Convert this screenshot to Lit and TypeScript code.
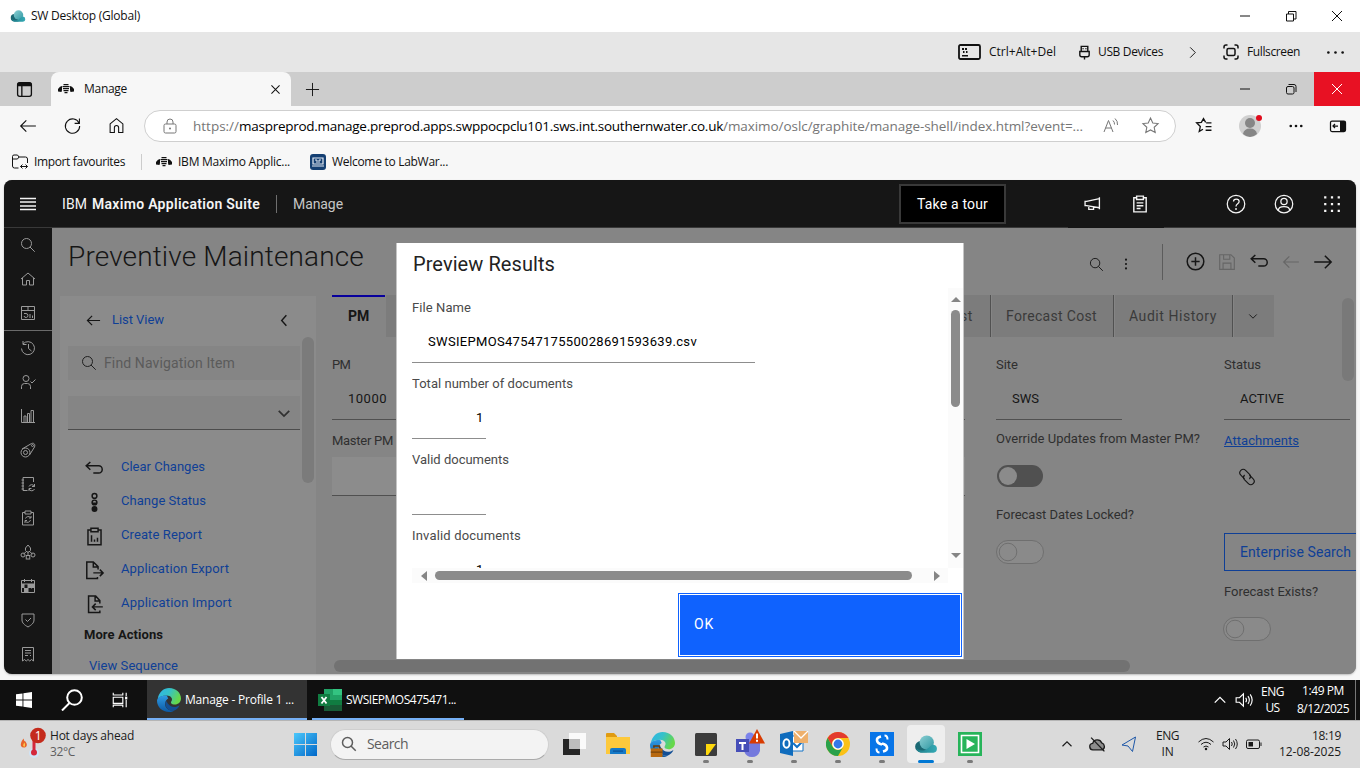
import { LitElement, html, css, svg, nothing } from "lit";
import { customElement, property } from "lit/decorators.js";

/** One line of text whose tracking is tuned so that it spans a known width. */
@customElement("fit-label")
class FitLabel extends LitElement {
  @property({ type: Number }) w = 0;
  static styles = css`
    :host { display: inline-block; white-space: pre; flex: none; }
  `;
  render() {
    return html`<slot></slot>`;
  }
  firstUpdated() {
    const chars = (this.textContent ?? "").length;
    const natural = this.getBoundingClientRect().width;
    if (!this.w || !chars) return;
    this.style.letterSpacing = `${(this.w - natural) / chars}px`;
    this.style.width = `${this.w}px`;
  }
}

const t = (text: string, w: number, cls = "") =>
  html`<fit-label class=${cls} .w=${w}>${text}</fit-label>`;

const shapes: Record<string, unknown> = {
  // viewBox 32, filled or stroked with the current colour
  search: svg`<circle cx="13" cy="13" r="10"/><path d="M20 20l9.500 9.500"/>`,
  home: svg`<path d="M2 16L16 4l14 12M5 14v14h8v-9h6v9h8V14"/>`,
  dash: svg`<path d="M3 3h26v26H3zM3 11h26M16 3v8M8 17h4a4 4 0 1 1-4 5M20 26v-8M25 26v-5"/>`,
  history: svg`<path d="M6 8a13 13 0 1 1-3 9M6 2v7h7M17 8v9l6 5"/>`,
  usercheck: svg`<circle cx="12" cy="9" r="6"/><path d="M3 30v-5a6 6 0 0 1 6-6h6a6 6 0 0 1 6 6v5M21 15l3 3 7-7"/>`,
  chart: svg`<path d="M3 2v27h27M8 29V16h4v13M15 29V11h4v18M22 29V5h5v24"/>`,
  asset: svg`<circle cx="11" cy="21" r="9"/><circle cx="11" cy="21" r="4"/><path d="M4 14L23 3c5-2 8 2 6 7L19 26"/><circle cx="25" cy="7" r="2"/>`,
  cycle: svg`<path d="M27 12V3H6v26h9M3 8h5M3 14h5M3 20h5M3 26h5M18 21a6 6 0 0 1 11 0M29 16v5h-5M29 26a6 6 0 0 1-11 0M18 30v-5h5"/>`,
  clipcycle: svg`<path d="M10 5H5v25h22V5h-5M10 2h12v6H10zM11 17a6 6 0 0 1 10-2M22 12v4h-4M21 20a6 6 0 0 1-10 3M10 26v-5h4"/>`,
  nodes: svg`<path d="M16 2l5 6v5l-3 3h-4l-3-3V8zM16 16v6M13 15l-6 5M19 15l6 5"/><circle cx="6" cy="22" r="4"/><circle cx="26" cy="22" r="4"/><rect x="12.500" y="23" width="7" height="7"/>`,
  calendar: svg`<path d="M3 5h26v24H3zM3 12h26M9 2v6M23 2v6M16 12v17M9 20v9M23 12v9"/><path class="f" d="M16 12h13v8h-13zM9 20h7v9h-7zM3 12h6v8H3z"/>`,
  shield: svg`<path d="M4 4h24v12c0 6-5 10-12 14C9 26 4 22 4 16zM11 15l4 4 7-7"/>`,
  receipt: svg`<path d="M5 30V3h22v27l-4-3-3.500 3-3.500-3-3.500 3L9 27zM10 9h12M10 14h12M10 19h6M20 19h2"/>`,
  menu: svg`<path d="M0 5h32M0 12h32M0 20h32M0 27h32"/>`,
  megaphone: svg`<path d="M29 4v23M29 7L5 12H2v8h3l24 4M9 21v6h9v-4"/>`,
  clipboard: svg`<path d="M10 5H5v25h22V5h-5M10 2h12v6H10zM10 14h12M10 19h12M10 24h7"/>`,
  help: svg`<circle cx="16" cy="16" r="14"/><path d="M12 12c0-5 9-5 9 0 0 4-5 3-5 8"/><circle class="f" cx="16" cy="24" r="1.500"/>`,
  user: svg`<circle cx="16" cy="16" r="14"/><circle cx="16" cy="12" r="5"/><path d="M7 26c0-8 18-8 18 0"/>`,
  apps: svg`<path class="f" d="M2 2h4v4H2zM14 2h4v4h-4zM26 2h4v4h-4zM2 14h4v4H2zM14 14h4v4h-4zM26 14h4v4h-4zM2 26h4v4H2zM14 26h4v4h-4zM26 26h4v4h-4z"/>`,
  kebab: svg`<circle class="f" cx="16" cy="6" r="2.400"/><circle class="f" cx="16" cy="16" r="2.400"/><circle class="f" cx="16" cy="26" r="2.400"/>`,
  add: svg`<circle cx="16" cy="16" r="14"/><path d="M16 9v14M9 16h14"/>`,
  save: svg`<path d="M3 3h20l6 6v20H3zM10 3v8h11V3M9 29V18h14v11"/>`,
  undo: svg`<path d="M9 5L2 11.500l7 6.500M2 11.500h21a6 6 0 0 1 0 12h-9"/>`,
  left: svg`<path d="M13 6L3 16l10 10M3 16h27"/>`,
  right: svg`<path d="M19 6l10 10-10 10M2 16h27"/>`,
  chevL: svg`<path d="M20 5L10 16l10 11"/>`,
  chevR: svg`<path d="M11 5l11 11-11 11"/>`,
  chevD: svg`<path d="M4 11l12 12 12-12"/>`,
  chevU: svg`<path d="M4 22L16 10l12 12"/>`,
  status: svg`<circle cx="16" cy="5" r="4"/><circle cx="16" cy="16" r="4"/><path class="f" d="M12 16h8a4 4 0 0 1-8 0z"/><circle class="f" cx="16" cy="27" r="5"/>`,
  report: svg`<path d="M10 5H5v25h22V5h-5M10 2h12v6H10zM11 25V14M16 25v-4M21 25v-7"/>`,
  exp: svg`<path d="M21 27v2.500H3v-28h11l8 8v5M14 2v8h8M14 20h16M25 14.500l5.500 5.500-5.500 5.500"/>`,
  imp: svg`<path d="M25 26v3.500H6v-28h12l7 8v5M17 2v8h8M12 20h18M18 14.500L12.500 20l5.500 5.500"/>`,
  clip: svg`<g transform="rotate(45 16 16)"><path d="M15 21.500H6a6 6 0 0 1 0-12h10a6 6 0 0 1 5.500 6"/><path d="M17 10.500h9a6 6 0 0 1 0 12H16a6 6 0 0 1-5.500-6"/></g>`,
  min: svg`<path d="M6 16h20"/>`,
  restore: svg`<path d="M7 12h14v14H7zM11 12V7h15v15h-5"/>`,
  restoreR: svg`<rect x="7" y="11" width="15" height="15" rx="3"/><path d="M11 7h11q4 0 4 4v11"/>`,
  close: svg`<path d="M6 6l20 20M26 6L6 26"/>`,
  plus: svg`<path d="M16 2v28M2 16h28"/>`,
  dots: svg`<circle class="f" cx="4" cy="16" r="2.200"/><circle class="f" cx="16" cy="16" r="2.200"/><circle class="f" cx="28" cy="16" r="2.200"/>`,
  dotsB: svg`<circle class="f" cx="4" cy="16" r="3"/><circle class="f" cx="16" cy="16" r="3"/><circle class="f" cx="28" cy="16" r="3"/>`,
  workspace: svg`<rect x="3" y="3" width="26" height="26" rx="4"/><path class="f" d="M3 5q0-2 3-2h20q3 0 3 2v5H3z"/><path d="M11 8v21"/>`,
  refresh: svg`<path d="M28.500 12A13.500 13.500 0 1 0 29.500 17M29 3v9h-9"/>`,
  home2: svg`<path d="M4 13L16 3l12 10v16h-8v-9a4 4 0 0 0-8 0v9H4z"/>`,
  lock: svg`<rect x="4" y="12" width="24" height="18" rx="3"/><path d="M10 12V8a6 6 0 0 1 12 0v4"/><circle class="f" cx="16" cy="21" r="2"/>`,
  star: svg`<path d="M16 2l4.300 9.200 10 1.200-7.400 6.900 2 10L16 24.400l-8.900 4.900 2-10-7.400-6.900 10-1.200z"/>`,
  readA: svg`<path d="M2 28L11 5l9 23M5 20h12M20 5a10 10 0 0 1 3 8M24 1a15 15 0 0 1 5 13"/>`,
  favs: svg`<path d="M21 11h10M20 18h11M20 25h11M15 23l-7 4 2-9-7-7 9-1 4-7 4 7"/>`,
  panel: svg`<rect x="1" y="6" width="30" height="21" rx="3"/><path class="f" d="M20 6h8q3 0 3 3v15q0 3-3 3h-8z"/><path d="M16 16H6M10 12l-4 4 4 4"/>`,
  impfav: svg`<path d="M13 28H5q-4 0-4-4V5q0-3 3-3h7l3 4h13q4 0 4 4v8M1 10h10l3-4M17 25h14M21 21l-4 4 4 4M27 21l4 4-4 4"/>`,
  bee: svg`<path class="f" d="M11 6h10v2.500H11zM9 10h14v2.500H9zM10 14h12v2.500H10zM11 18h10v2.500H11zM13 22h6v2.500h-6zM8 10q-4 0-8 6v5l7 1 1-4zM24 10q4 0 8 6v5l-7 1-1-4z"/>`,
  usb: svg`<path d="M9 14V3h14v11M13 7v2M19 7v2M6 14h20v7q0 4-4 4H10q-4 0-4-4zM16 25v6"/>`,
  full: svg`<path d="M2 9V6q0-4 4-4h3M23 2h3q4 0 4 4v3M30 23v3q0 4-4 4h-3M9 30H6q-4 0-4-4v-3"/><rect x="8" y="9" width="16" height="14" rx="3"/>`,
  speaker: svg`<path d="M2 12h6l7-7v22l-7-7H2zM19 12q3 4 0 8M23 9q5 7 0 14M27 6q7 10 0 20"/>`,
  taskview: svg`<path d="M4 3v4h17V3M4 11h17v11H4zM4 29v-4h17v4M27 3v6M27 16v13"/><path class="f" d="M25 10h4v5h-4z"/>`,
  cloudoff: svg`<path class="g" d="M8 26a6 6 0 0 1-1-12 9 9 0 0 1 17-1 7 7 0 0 1 1 13z"/><path d="M4 3l25 26"/>`,
  nav: svg`<path d="M29 2L2 18l12 2 9 11z"/>`,
  wifi: svg`<path d="M1 12q15-14 30 0M6 17q10-9 20 0M11 22q5-4 10 0"/><circle class="f" cx="16" cy="26" r="2.500"/>`,
  battery: svg`<rect x="1" y="8" width="26" height="17" rx="3"/><path class="f" d="M5 12h9v9H5zM29 13h2v7h-2z"/>`,
};

const ic = (name: string, size = 16, cls = "w2") =>
  html`<svg class="ic ${cls}" width=${size} height=${size} viewBox="0 0 32 32">${shapes[name]}</svg>`;

const cloud = (w: number) => html`<svg width=${w} height=${w} viewBox="0 0 32 32">
  <defs><linearGradient id="cl" x1="0" x2="1" y1="0" y2="0"><stop offset="0" stop-color="#1f7f8b"/><stop offset="1" stop-color="#35aab5"/></linearGradient>
  <linearGradient id="cm" x1="0" x2="1" y1="0" y2="1"><stop offset="0" stop-color="#8ccfd3"/><stop offset="1" stop-color="#2f98a3"/></linearGradient></defs>
  <path d="M9 12h8v15H9a7.500 7.500 0 0 1 0-15z" fill="#1b6873"/><circle cx="17" cy="14" r="9.500" fill="url(#cm)"/>
  <path d="M3 22q5 4 12 2c5-2 7-7 11-7a5.300 5.300 0 0 1 0 10.500H9q-4 0-6-5.500z" fill="url(#cl)"/></svg>`;

const edge = (w: number, extra: unknown = nothing) => html`<svg width=${w} height=${w} viewBox="0 0 32 32">
  <defs><linearGradient id="eg" x1="0" x2="1" y1="0" y2=".4"><stop offset="0" stop-color="#2fb4e8"/><stop offset=".5" stop-color="#35c1c9"/><stop offset="1" stop-color="#66d84a"/></linearGradient>
  <linearGradient id="eh" x1="0" x2="0" y1="0" y2="1"><stop offset="0" stop-color="#2f9be4"/><stop offset="1" stop-color="#0c59a4"/></linearGradient></defs>
  <path d="M1 14C3 5 9 0 16 0c10 0 16 7 16 14 0 5-4 8-8 8-5 0-6-2-5-4 3-4-1-8-6-8-6 0-10 2-12 4z" fill="url(#eg)"/>
  <path d="M13 10C5 10 0 13 0 17c0 8 7 15 16 15 3 0 5-.5 7-2-8 1-13-4-12-10 .4-3 2-5 4-6z" fill="url(#eh)"/>
  <path d="M12 17c-3 7 3 15 11 13 3-1 6-4 7-7-4 3-9 3-12 1-3-2-4-4-6-7z" fill="#134f95"/>${extra}</svg>`;

const colourIcons: Record<string, unknown> = {
  tiles: html`<svg width="24" height="24" viewBox="0 0 24 24"><path d="M1 7h17v16H1z" fill="#262626"/><path d="M7 1h17v16H7z" fill="#fafafa"/><path d="M7 7h11v10H7z" fill="#bcbcbc"/></svg>`,
  folder: html`<svg width="26" height="24" viewBox="0 0 26 24"><path d="M1 2q0-1 1-1h7l3 3v3H1z" fill="#e09b12"/><path d="M1 5h24v17H1z" fill="#fdc93c"/><path d="M5 22v-4q0-2 2-2h12q2 0 2 2v4z" fill="#1579c7"/><path d="M8 18.500h10v1.200H8z" fill="#0b4f95"/></svg>`,
  edgework: edge(25, svg`<path d="M1 21h15v11H1z" fill="#b8680e"/><path d="M5 20v-2h7v2" stroke="#6b3a06" stroke-width="2" fill="none"/><path d="M1 25h15v1.500H1z" fill="#70400a"/>`),
  note: html`<svg width="22" height="24" viewBox="0 0 22 24"><rect width="22" height="23" y="1" rx="1.500" fill="#3c3c3c"/><path d="M11 12h10L13 23h-2z" fill="#ffd90c"/></svg>`,
  teams: html`<svg width="30" height="30" viewBox="0 0 30 30"><circle cx="15" cy="8" r="4.500" fill="#7b83eb"/><path d="M9 12h16v10q-2 6-8 6t-8-6z" fill="#7479dd"/><path d="M1 10h13v13H1z" fill="#464eb8"/><path d="M4 13h7v2H8.500v6h-2v-6H4z" fill="#fff"/><path d="M22 0l8 14.500H14z" fill="#d83b01"/><path d="M21 4.500h2v5h-2zM21 10.800h2v2h-2z" fill="#fff"/></svg>`,
  outlook: html`<svg width="30" height="26" viewBox="0 0 30 26"><path d="M13 5h11v15H13z" fill="#fff" stroke="#1573c5"/><path d="M14 12l4 4 5-5" fill="none" stroke="#1573c5" stroke-width="2"/><path d="M1 3l13-3v25L1 22z" fill="#0f6cbd"/><ellipse cx="7.500" cy="12.500" rx="3" ry="4.200" fill="none" stroke="#fff" stroke-width="2"/><path d="M15 0h14v12H15z" fill="#eeb06c"/><path d="M15 0l7 7 7-7" fill="none" stroke="#fff" stroke-width="1.300"/></svg>`,
  chrome: html`<svg width="24" height="24" viewBox="0 0 24 24"><circle cx="12" cy="12" r="12" fill="#fbc116"/><path d="M1.600 6A12 12 0 0 1 22.400 6H12a6 6 0 0 0-5.200 9z" fill="#e33b2e"/><path d="M1.600 6A12 12 0 0 0 12 24l5.200-9a6 6 0 0 1-10.400 0z" fill="#2aa14b"/><circle cx="12" cy="12" r="5.800" fill="#fff"/><circle cx="12" cy="12" r="4.400" fill="#3478e8"/></svg>`,
  sblue: html`<svg width="24" height="24" viewBox="0 0 24 24"><path d="M0 0h24v24H0z" fill="#0875e8"/><path d="M11 4.500q-4.500 1-4 4t5 4M13 19.500q4.500-1 4-4t-5-4" fill="none" stroke="#fff" stroke-width="2.600"/><path d="M14.500 3.500q3 0 3 4M9.500 20.500q-3 0-3-4" fill="none" stroke="#fff" stroke-width="2"/></svg>`,
  cloud: cloud(24),
  play: html`<svg width="24" height="24" viewBox="0 0 24 24"><path d="M0 0h24v24H0z" fill="#27b45a"/><path d="M3.500 3.500h17v17h-17z" fill="none" stroke="#fff" stroke-width="1.600"/><path d="M8.500 7l8.500 5-8.500 5z" fill="#fff"/></svg>`,
};

@customElement("app-root")
class AppRoot extends LitElement {
  static styles = css`
    :host { display: flex; flex-direction: column; width: 1360px; height: 768px; overflow: hidden; background: #f7f7f7; color: #111; font: 12px/16px "Open Sans", "Noto Sans", sans-serif; }
    * { box-sizing: border-box; }
    .row { display: flex; align-items: center; }
    .sp { flex: 1; }
    .box { display: flex; align-items: center; justify-content: center; flex: none; }
    .b44 { width: 44px; } .b46 { width: 46px; height: 100%; } .b48 { width: 48px; height: 100%; } .b32 { width: 32px; }
    .ic { fill: none; stroke: currentColor; flex: none; display: block; overflow: visible; }
    .ic .f { fill: currentColor; stroke: none; }
    .ic .g { fill: #8c8c8c; }
    .w2 { stroke-width: 2; } .w25 { stroke-width: 2.500; } .w3 { stroke-width: 3; } .w4 { stroke-width: 4; }

    .title { height: 32px; flex: none; background: #fff; padding-left: 10px; }
    .m5 { margin-left: 5px; }
    .remote { height: 40px; flex: none; background: #e6e6e6; padding-left: 958px; }
    .m8 { margin-left: 8px; } .m6 { margin-left: 6px; }
    .usb { margin-left: 21px; } .more { margin: 0 23px 0 22px; }
    .rdots { margin-left: 26px; }
    .tabs { height: 34px; flex: none; background: #cdcdcd; }
    .ws { width: 48px; }
    .tab { width: 240px; height: 34px; margin-left: 3px; background: #f7f7f7; border-radius: 8px 8px 0 0; padding: 0 9px 0 7px; gap: 10px; }
    .newtab { width: 43px; }
    .red { background: #e81123; color: #fff; }
    .addr { height: 39px; flex: none; padding-left: 6px; }
    .pill { width: 1032px; height: 32px; margin-left: 6px; border: 1px solid #cfcfcf; border-radius: 16px; background: #fff; padding-left: 17px; font-size: 13.500px; color: #767676; }
    .url { margin-left: 15px; display: flex; }
    .url .dom { color: #000; }
    .read { margin-left: 20px; } .star { margin-left: 23px; }
    .favicon { margin-left: 19px; }
    .avatar { width: 22px; height: 22px; margin-left: 27px; }
    .adots { margin-left: 28px; } .side { margin-left: 27px; }
    .favs { height: 34px; flex: none; padding-left: 12px; }
    .vl { width: 1px; height: 16px; background: #ccc; margin: 0 14px 0 16px; }
    .lab { margin: 0 6px 0 20px; }

    .app { width: 1352px; height: 494px; flex: none; margin: 1px 4px 6px; border-radius: 8px; overflow: hidden; background: #858585; position: relative; font-family: Roboto, "Noto Sans", sans-serif; font-size: 13px; box-shadow: 0 1px 2px #bbb; }
    .hd { height: 48px; background: #161616; border-bottom: 1px solid #393939; color: #f4f4f4; font-size: 14px; }
    .hd .brand { font-weight: 600; margin-left: 5px; }
    .ibm { margin-left: 10px; }
    .hsep { width: 1px; height: 18px; background: #6f6f6f; margin: 0 16px; }
    .dim { color: #c6c6c6; }
    .tour { width: 107px; height: 40px; margin-right: 62px; background: #000; border: 2px solid #393939; color: #fff; }
    .dark { height: 48px; align-self: flex-start; background: #161616; margin-right: 48px; padding-bottom: 1px; }
    .mid { display: flex; height: 446px; }
    .rail { width: 48px; flex: none; background: #161616; color: #9a9a9a; }
    .rail .box { height: 34px; }
    .rail .box.cut { height: 35px; border-top: 1px solid #6a6a6a; }
    .main { width: 1304px; height: 446px; flex: none; position: relative; overflow: hidden; background: #858585; color: #161616; }
    .mh { height: 67px; padding: 0 17px; color: #161616; }
    .h1 { font-size: 28px; line-height: 34px; font-weight: 300; margin: 0 0 10px -1px; }
    .hs { margin: 5px 15px 0 0; } .hk { margin: 5px 29px 0 0; }
    .ms { width: 1px; height: 36px; background: #5c5c5c; margin: 0 16px 0 0; }
    .acts { color: #161616; }
    .acts .off { color: #666; }
    .cols { display: flex; padding-left: 8px; }
    .nav { width: 256px; height: 380px; flex: none; background: #8b8b8b; margin-top: 1px; }
    .lv { height: 41px; padding: 8px 24px 0 26px; }
    .blue { color: #0f3f96; }
    .lv fit-label { margin: -2px 0 0 11px; }
    .nb { display: flex; }
    .nl { width: 232px; margin: 9px 2px 0 8px; flex: none; }
    .find { height: 34px; background: #858585; padding-left: 13px; color: #5b5b5b; font-size: 14px; }
    .find .ic { color: #202020; margin-right: 7px; }
    .sel { height: 34px; margin: 16px 0 20px; background: #858585; border-bottom: 1px solid #4c4c4c; justify-content: flex-end; padding-right: 9px; color: #303030; }
    .it { height: 34px; color: #0f3f96; }
    .it .box { width: 53px; color: #161616; padding-top: 2px; }
    .ma { height: 30px; padding-left: 16px; font-weight: 700; }
    .vs { height: 32px; padding-left: 21px; color: #0f3f96; }
    .bar { width: 12px; border-radius: 6px; background: #7b7b7b; }
    .nb .bar { height: 146px; }
    .con { width: 988px; flex: none; margin-left: 16px; }
    .tb { height: 42px; display: flex; font-size: 14px; color: #3a3a3a; }
    .tb > div { display: flex; align-items: center; background: #7c7c7c; border-right: 1px solid #515151; margin-right: 1px; padding-left: 15px; }
    .tb .on { width: 53px; background: none; border: 0; border-top: 2px solid #08009c; padding: 0 0 2px 16px; color: #161616; font-weight: 700; }
    .tb .hid { width: 605px; justify-content: flex-end; padding-right: 17px; }
    .tb .fc { width: 122px; padding-left: 14px; } .tb .au { width: 118px; padding-left: 14px; } .tb .dd { width: 40px; border: 0; margin: 0; padding-left: 14px; color: #161616; }
    .form { display: grid; grid-template-columns: 664px 228px 132px; padding-top: 18px; color: #2f2f2f; }
    .lb { height: 20px; display: flex; align-items: center; }
    .in { height: 45px; border-bottom: 1px solid #505050; display: flex; align-items: center; padding: 3px 0 0 16px; color: #161616; }
    .c1 .in { width: 633px; } .c2 .in, .c3 .in { width: 126px; }
    .c1 .fill { height: 39px; background: #8c8c8c; }
    .lb2 { margin: 11px 0 6px; } .lb3 { margin-top: 9px; }
    .on-t, .off-t { display: block; }
    .on-t { margin-top: 16px; }
    .lb4 { margin: 18px 0 15px; }
    .attach { margin-top: 11px; text-decoration: underline; color: #0f3f96; }
    .clipi { padding: 17px 0 0 14px; height: 82px; color: #161616; }
    .ent { height: 38px; border: 1px solid #0f3f96; border-right: 0; padding-left: 15px; display: flex; align-items: center; color: #0f3f96; font-size: 14px; margin-bottom: 11px; }
    .lb5 { margin-bottom: 15px; }
    .shl { margin-left: -1px; }
    .vbar { position: absolute; left: 1290px; top: 70px; height: 83px; background: #797979; }
    .hbar { position: absolute; left: 282px; top: 432px; width: 796px; height: 12px; border-radius: 6px; background: #727272; }

    .dlg { position: absolute; left: 392px; top: 63px; width: 568px; height: 416px; background: #fff; color: #161616; border: solid #c5c5c5; border-width: 0 1px; }
    .dt { height: 45px; padding: 0 0 3px 16px; display: flex; align-items: center; font-size: 20px; color: #222; }
    .db { height: 280px; display: flex; }
    .df { width: 536px; height: 280px; flex: none; overflow: hidden; margin-left: 15px; padding-top: 10px; color: #4a4a4a; }
    .di { height: 45px; border-bottom: 1px solid #8d8d8d; margin-bottom: 11px; display: flex; align-items: center; padding-top: 4px; color: #000; }
    .dw { width: 343px; padding-left: 16px; } .dn { width: 74px; justify-content: flex-end; padding-right: 1px; }
    .vsb { width: 15px; background: #fbfbfb; display: flex; flex-direction: column; align-items: center; padding: 9px 0 0; flex: none; }
    .vsb i { width: 9px; height: 97px; border-radius: 5px; background: #8b8b8b; margin: 8px 0 146px; }
    .hsb { height: 15px; margin: 0 15px; background: #fbfbfb; display: flex; align-items: center; padding-left: 9px; }
    .hsb i { width: 477px; height: 9px; border-radius: 5px; background: #8b8b8b; margin: 0 22px 0 8px; }
    .up, .dn2, .lf, .rt { border: solid transparent; width: 0; height: 0; }
    .up { border-width: 0 5px 5px; border-bottom-color: #858585; }
    .dn2 { border-width: 5px 5px 0; border-top-color: #858585; }
    .lf { border-width: 5px 6px 5px 0; border-right-color: #858585; }
    .rt { border-width: 5px 0 5px 6px; border-left-color: #858585; }
    .ok { width: 284px; height: 64px; margin: 10px 0 0 281px; background: #0f62fe; border: 1px solid #0f62fe; box-shadow: inset 0 0 0 1px #fff; color: #fff; font-size: 14px; padding: 0 0 2px 15px; display: flex; align-items: center; }

    .tk { height: 40px; flex: none; background: #101010; color: #fff; }
    .wi { width: 160px; height: 40px; margin-left: 3px; padding: 2px 0 0 10px; gap: 4px; background: #333; border-bottom: 2px solid #76b0f5; }
    .xl { width: 152px; margin-left: 5px; padding-left: 6px; background: none; }
    .two { display: flex; flex-direction: column; align-items: center; }
    .tray { gap: 8px; }
    .dat { margin: 0 6px 0 12px; line-height: 18px; }
    .lng { margin: 0 1px 0 0; }
    .cap { width: 5px; height: 40px; border-left: 1px solid #777; }
    .bt { height: 48px; flex: none; background: #dadada; border-top: 1px solid #b5b5b5; color: #1a1a1a; padding-bottom: 1px; }
    .wx { margin-left: 18px; overflow: visible; }
    .wt { width: 84px; margin-left: 4px; align-items: flex-start; }
    .gr { color: #5e5e5e; }
    .win { margin: 0 13px 0 160px; display: block; }
    .sb { width: 219px; height: 31px; border-radius: 16px; background: #f3f3f3; border: 1px solid #cfcfcf; border-bottom-color: #aaa; padding-left: 10px; gap: 10px; font-size: 14px; color: #5d5d5d; margin-right: 3px; }
    .ap { width: 44px; height: 47px; display: flex; align-items: center; justify-content: center; position: relative; }
    .ap.act::before { content: ""; position: absolute; left: 3px; top: 4px; width: 38px; height: 38px; background: #eee; border-radius: 4px; z-index: 0; }
    .ap svg { position: relative; }
    .ap.run::after { content: ""; position: absolute; left: 19px; top: 39px; width: 6px; height: 3px; border-radius: 2px; background: #7a7a7a; }
    .ap.act::after { left: 14px; width: 16px; background: #0078d4; }
    .end { align-items: flex-end; margin: 0 19px 0 17px; }
    .l2 { margin: 0 19px 0 19px; }
    .nv { color: #1d57a8; }
  `;

  private railIcons = ["search", "home", "dash", "history", "usercheck", "chart", "asset", "cycle", "clipcycle", "nodes", "calendar", "shield", "receipt"];
  private actions: [string, string, number][] = [
    ["undo", "Clear Changes", 84], ["status", "Change Status", 85], ["report", "Create Report", 81],
    ["exp", "Application Export", 108], ["imp", "Application Import", 111],
  ];
  private apps: [string, string][] = [
    ["tiles", ""], ["folder", ""], ["edgework", ""], ["note", "run"], ["teams", "run"], ["outlook", "run"],
    ["chrome", "run"], ["sblue", "run"], ["cloud", "run act"], ["play", "run"],
  ];

  private toggle(cls: string) {
    return html`<svg class="off-t ${cls}" width="48" height="24" viewBox="0 0 48 24"><rect x=".5" y=".5" width="47" height="23" rx="11.500" fill="#8a8a8a" stroke="#6f6f6f"/><circle cx="12" cy="12" r="8.800" fill="none" stroke="#6f6f6f"/></svg>`;
  }

  render() {
    return html`
      <div class="row title">${cloud(16)}${t("SW Desktop (Global)", 109, "m5")}<div class="sp"></div>
        <div class="box b46">${ic("min", 16)}</div><div class="box b46">${ic("restore", 16)}</div><div class="box b46">${ic("close", 16)}</div></div>
      <div class="row remote">
        <svg width="23" height="16" viewBox="0 0 23 16"><rect x="1" y="1" width="21" height="14" rx="1.500" fill="none" stroke="#111" stroke-width="1.800"/><path d="M4 4h2v2H4zM7 4h2v2H7zM5 7h1.500v2H5zM8 7h1.500v2H8zM4 11h6v1.500H4z" fill="#111"/></svg>
        ${t("Ctrl+Alt+Del", 67, "m8")}<span class="usb">${ic("usb", 15, "w3")}</span>${t("USB Devices", 65, "m6")}
        <span class="more">${ic("chevR", 15, "w2")}</span>${ic("full", 16, "w3")}${t("Fullscreen", 53, "m8")}<span class="rdots">${ic("dots", 19, "w2")}</span>
      </div>
      <div class="row tabs"><div class="box ws">${ic("workspace", 17, "w25")}</div>
        <div class="row tab">${ic("bee", 16)}${t("Manage", 43)}<div class="sp"></div>${ic("close", 13, "w25")}</div>
        <div class="box newtab">${ic("plus", 15, "w2")}</div><div class="sp"></div>
        <div class="box b46">${ic("min", 16)}</div><div class="box b46">${ic("restoreR", 16)}</div><div class="box b46 red">${ic("close", 16)}</div></div>
      <div class="row addr"><div class="box b44">${ic("left", 18)}</div><div class="box b44">${ic("refresh", 17)}</div><div class="box b44">${ic("home2", 17)}</div>
        <div class="row pill">${ic("lock", 16)}<span class="url">${t("https://", 46)}${t("maspreprod.manage.preprod.apps.swppocpclu101.sws.int.southernwater.co.uk", 484, "dom")}${t("/maximo/oslc/graphite/manage-shell/index.html?event=...", 360)}</span>
          <span class="read">${ic("readA", 16)}</span><span class="star">${ic("star", 17)}</span></div>
        <span class="favicon">${ic("favs", 17, "w25")}</span>
        <svg class="avatar ic" viewBox="0 0 22 22"><circle cx="11" cy="11" r="11" fill="#d0d0d0" stroke="none"/><circle cx="11" cy="8" r="5" fill="#868686" stroke="none"/><path d="M4 19q1-5.500 7-5.500t7 5.500q-7 6-14 0z" fill="#868686" stroke="none"/><circle cx="20" cy="3" r="3" fill="#e00b1c" stroke="none"/></svg>
        <span class="adots">${ic("dotsB", 14, "w2")}</span><span class="side">${ic("panel", 16, "w25")}</span></div>
      <div class="row favs">${ic("impfav", 16)}${t("Import favourites", 91, "m6")}<div class="vl"></div>${ic("bee", 16)}${t("IBM Maximo Applic...", 112, "m6")}
        <svg class="lab" width="16" height="16" viewBox="0 0 16 16"><rect width="16" height="16" rx="3" fill="#143f72"/><path d="M3 4h10v6H3zM2 12h12" fill="none" stroke="#e6edf5" stroke-width="1.200"/><path d="M5 6h2v3M9 9V6h2" fill="none" stroke="#e6edf5"/></svg>${t("Welcome to LabWar...", 116)}</div>

      <div class="app">
        <div class="row hd"><div class="box b48">${ic("menu", 16, "w3")}</div>${t("IBM", 25, "ibm")}${t("Maximo Application Suite", 168, "brand")}<div class="hsep"></div>${t("Manage", 50, "dim")}
          <div class="sp"></div><div class="box tour">${t("Take a tour", 71)}</div>
          <div class="row dark"><div class="box b48">${ic("megaphone", 17, "w25")}</div><div class="box b48">${ic("clipboard", 18, "w25")}</div></div>
          <div class="box b48">${ic("help", 20)}</div><div class="box b48">${ic("user", 20)}</div><div class="box b48">${ic("apps", 18)}</div></div>
        <div class="mid">
          <div class="rail">${this.railIcons.map((n, i) => html`<div class="box ${i === 3 ? "cut" : ""}">${ic(n, 16)}</div>`)}</div>
          <div class="main">
            <div class="row mh">${t("Preventive Maintenance", 296, "h1")}<div class="sp"></div>
              <span class="hs">${ic("search", 15)}</span><span class="hk">${ic("kebab", 14)}</span><div class="ms"></div>
              <div class="row acts"><div class="box b32">${ic("add", 19, "w25")}</div><div class="box b32 off">${ic("save", 18)}</div><div class="box b32">${ic("undo", 19, "w25")}</div><div class="box b32 off">${ic("left", 18)}</div><div class="box b32">${ic("right", 20, "w25")}</div></div></div>
            <div class="cols">
              <div class="nav">
                <div class="row lv">${ic("left", 15, "w25")}${t("List View", 52, "blue")}<div class="sp"></div>${ic("chevL", 15, "w3")}</div>
                <div class="nb"><div class="nl">
                  <div class="row find">${ic("search", 16)}${t("Find Navigation Item", 131)}</div>
                  <div class="row sel">${ic("chevD", 14, "w4")}</div>
                  ${this.actions.map(([i, s, w]) => html`<div class="row it"><div class="box">${ic(i, 19, "w25")}</div>${t(s, w)}</div>`)}
                  <div class="row ma">${t("More Actions", 79)}</div><div class="row vs">${t("View Sequence", 89)}</div>
                </div><div class="bar"></div></div>
              </div>
              <div class="con">
                <div class="tb"><div class="on">${t("PM", 21)}</div><div class="hid">${t("st", 13)}</div><div class="fc">${t("Forecast Cost", 91)}</div><div class="au">${t("Audit History", 88)}</div><div class="dd">${ic("chevD", 10, "w3")}</div></div>
                <div class="form">
                  <div class="c1"><div class="lb">${t("PM", 18)}</div><div class="in">${t("10000", 39)}</div><div class="lb lb2">${t("Master PM", 61)}</div><div class="in fill"></div></div>
                  <div class="c2"><div class="lb">${t("Site", 22)}</div><div class="in">${t("SWS", 27)}</div><div class="lb lb3">${t("Override Updates from Master PM?", 204)}</div>
                    <svg class="on-t" width="48" height="22" viewBox="0 0 48 22"><rect x="1" width="46" height="22" rx="11" fill="#505050"/><circle cx="12" cy="11" r="9" fill="#8b8b8b"/></svg>
                    <div class="lb lb4">${t("Forecast Dates Locked?", 138)}</div>${this.toggle("")}</div>
                  <div class="c3"><div class="lb">${t("Status", 37)}</div><div class="in">${t("ACTIVE", 44)}</div><div class="lb attach">${t("Attachments", 75)}</div><div class="clipi">${ic("clip", 18)}</div>
                    <div class="ent">${t("Enterprise Search", 111)}</div><div class="lb lb5">${t("Forecast Exists?", 94)}</div>${this.toggle("shl")}</div>
                </div>
              </div>
            </div>
            <div class="bar vbar"></div><div class="hbar"></div>
          </div>
        </div>
        <div class="dlg"><div class="dt">${t("Preview Results", 142)}</div>
          <div class="db"><div class="df">
            <div class="lb">${t("File Name", 59)}</div><div class="di dw">${t("SWSIEPMOS4754717550028691593639.csv", 269)}</div>
            <div class="lb">${t("Total number of documents", 161)}</div><div class="di dn">${t("1", 9)}</div>
            <div class="lb">${t("Valid documents", 97)}</div><div class="di dn"></div>
            <div class="lb">${t("Invalid documents", 109)}</div><div class="di dn">${t("1", 9)}</div>
          </div><div class="vsb"><b class="up"></b><i></i><b class="dn2"></b></div></div>
          <div class="hsb"><b class="lf"></b><i></i><b class="rt"></b></div>
          <div class="ok">${t("OK", 20)}</div></div>
      </div>

      <div class="row tk"><div class="box b48"><svg width="16" height="16" viewBox="0 0 16 16" fill="#fff"><path d="M0 2.300L6.500 1.400v6.200H0zM7.400 1.300L16 0v7.600H7.400zM0 8.400h6.500v6.200L0 13.700zM7.400 8.400H16V16l-8.600-1.200z"/></svg></div>
        <div class="box b48"><svg width="22" height="22" viewBox="0 0 22 22" fill="none" stroke="#fff" stroke-width="2"><circle cx="13.500" cy="8.500" r="7.300"/><path d="M8.500 14L1 21.500"/></svg></div><div class="box b48">${ic("taskview", 18)}</div>
        <div class="row wi">${edge(24)}${t("Manage - Profile 1 ...", 109)}</div>
        <div class="row wi xl"><svg width="24" height="22" viewBox="0 0 24 22"><path d="M6 0h18v22H6z" fill="#21a366"/><path d="M15 0h9v6h-9z" fill="#33c481"/><path d="M6 11h18v11H6z" fill="#107c41"/><path d="M6 16h18v6H6z" fill="#185c37"/><path d="M0 5h12v12H0z" fill="#107c41"/><path d="M3.500 8l5 6.500M8.500 8l-5 6.500" stroke="#fff" stroke-width="1.800"/></svg>${t("SWSIEPMOS475471...", 110)}</div>
        <div class="sp"></div><div class="row tray">${ic("chevU", 14, "w3")}${ic("speaker", 18)}<div class="two lng">${t("ENG", 23)}${t("US", 14)}</div></div>
        <div class="two dat">${t("1:49 PM", 42)}${t("8/12/2025", 52)}</div><div class="cap"></div></div>

      <div class="row bt">
        <svg class="wx" width="28" height="30" viewBox="0 0 28 30"><path d="M3 17q-1-3 2.500-7.500 .5 3 2 3 3 4-.5 6-3 .5-4-1.500z" fill="#e8632a"/><path d="M5.200 17q0-2.500 1.300-3.500 1 2.500 0 4.500z" fill="#ffd34d"/><circle cx="16" cy="24" r="5" fill="#cfe4f7"/><path d="M14.500 10h3v14h-3z" fill="#d4283c"/><circle cx="16" cy="23.500" r="3" fill="#d4283c"/><circle cx="20" cy="6.500" r="7.800" fill="#c42b1c"/><text x="16.800" y="11" font-size="12" fill="#fff">1</text></svg>
        <div class="two wt">${t("Hot days ahead", 84)}${t("32°C", 25, "gr")}</div>
        <svg class="win" width="23" height="23" viewBox="0 0 23 23"><defs><linearGradient id="wn" x1="0" x2="1" y1="0" y2="1"><stop offset="0" stop-color="#4cc8fb"/><stop offset="1" stop-color="#0067c8"/></linearGradient></defs><path d="M0 0h11v11H0zM12 0h11v11H12zM0 12h11v11H0zM12 12h11v11H12z" fill="url(#wn)"/></svg>
        <div class="row sb">${ic("search", 16, "w3")}${t("Search", 41)}</div>
        ${this.apps.map(([n, c]) => html`<div class="ap ${c}">${colourIcons[n]}</div>`)}
        <div class="sp"></div>${ic("chevU", 12, "w3")}<div class="box b48">${ic("cloudoff", 17, "w25")}</div><span class="nv">${ic("nav", 16)}</span>
        <div class="two l2">${t("ENG", 23)}${t("IN", 12)}</div><div class="row tray">${ic("wifi", 16)}${ic("speaker", 16)}${ic("battery", 16)}</div>
        <div class="two end">${t("18:19", 29)}${t("12-08-2025", 62)}</div></div>
    `;
  }
}
